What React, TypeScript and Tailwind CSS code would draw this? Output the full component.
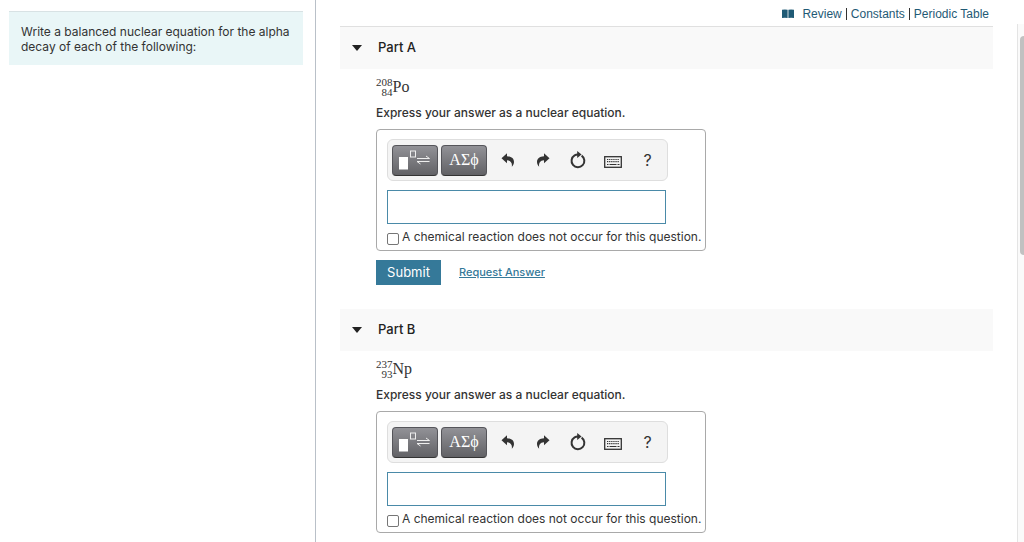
import { useState } from "react"

interface PartData {
  id: string
  title: string
  mass: string
  atomic: string
  symbol: string
}

const parts: Array<PartData> = [
  { id: "a", title: "Part A", mass: "208", atomic: "84", symbol: "Po" },
  { id: "b", title: "Part B", mass: "237", atomic: "93", symbol: "Np" },
]

function BookIcon() {
  return (
    <svg width="12" height="10" viewBox="0 0 12 10" fill="#1f5a75" aria-hidden="true">
      <path d="M0 .8Q3 0 5.6 .8V9Q3 8.3 0 9ZM6.4 .8Q9 0 12 .8V9Q9 8.3 6.4 9Z" />
    </svg>
  )
}

function TemplateIcon() {
  return (
    <svg width="32" height="20" viewBox="0 0 32 20" fill="none" aria-hidden="true">
      <rect x="0" y="7" width="9" height="12.5" fill="#fff" />
      <rect x="11.5" y="1" width="5" height="6" stroke="#eee" />
      <path d="M18 8.5H30.5L27 6M30.5 11.5H18L21.5 14" stroke="#eee" />
    </svg>
  )
}

function UndoIcon() {
  return (
    <svg width="14" height="14" viewBox="0 0 14 14" fill="#333" aria-hidden="true">
      <path d="M0.5 5.2 6 .3V3.2C10.5 3.4 13 5.5 13 9 13 10.8 12.2 12.6 10.8 13.7 11.4 10.3 10 7.5 6 7.3V10.2Z" />
    </svg>
  )
}

function ResetIcon() {
  return (
    <svg width="16" height="18" viewBox="0 0 16 18" fill="none" aria-hidden="true">
      <path
        d="M11.6 4.6A6.4 6.4 0 1 1 4.6 4.4Q6 3.5 8 3.4"
        stroke="#333"
        strokeWidth="2"
      />
      <path d="M7.2 0 11.6 3.4 7.2 7Z" fill="#333" />
    </svg>
  )
}

function KeyboardIcon() {
  return (
    <svg width="18" height="12" viewBox="0 0 18 12" fill="none" aria-hidden="true">
      <rect x=".7" y=".7" width="16.6" height="10.6" stroke="#333" strokeWidth="1.3" />
      <path d="M3 3.5H15.5M3 5.7H15.5" stroke="#333" strokeWidth="1.2" strokeDasharray="1.3 .8" />
      <path d="M3 8.5H4.5M5.5 8.5H12.5M13.5 8.5H15.5" stroke="#333" strokeWidth="1.2" />
    </svg>
  )
}

const darkButton =
  "flex h-[31px] w-[46px] shrink-0 items-center justify-center rounded border border-[#55555a] border-b-[#333] bg-linear-to-b from-[#929297] to-[#626266] text-white"
const plainButton = "flex h-8 w-[35px] shrink-0 items-center justify-center text-[#333]"

function AnswerBox({ part }: { part: PartData }) {
  const [answer, setAnswer] = useState("")
  const [noReaction, setNoReaction] = useState(false)

  return (
    <div className="w-[330px] rounded border border-[#a9a9a9] pt-[9px] pb-1 pl-2.5">
      <div className="flex h-[42px] w-[281px] items-center gap-[3px] rounded-md border border-[#dedede] bg-[#f4f4f4] pl-1">
        <button className={darkButton} aria-label="Templates">
          <TemplateIcon />
        </button>
        <button
          className={`${darkButton} font-['Liberation_Serif',serif] text-base`}
          aria-label="Symbols"
        >
          ΑΣϕ
        </button>
        <div className="flex">
          <button className={plainButton} aria-label="Undo">
            <UndoIcon />
          </button>
          <button className={plainButton} aria-label="Redo">
            <span className="-scale-x-100">
              <UndoIcon />
            </span>
          </button>
          <button className={plainButton} aria-label="Reset">
            <ResetIcon />
          </button>
          <button className={`${plainButton} pt-1`} aria-label="Keyboard shortcuts">
            <KeyboardIcon />
          </button>
          <button className={`${plainButton} text-base`} aria-label="Help">
            ?
          </button>
        </div>
      </div>
      <input
        type="text"
        aria-label={`${part.title} answer`}
        className="mt-[9px] block h-[34px] w-[279px] border border-[#4a8aa8] bg-white px-2 text-sm outline-none"
        value={answer}
        onChange={(e) => setAnswer(e.target.value)}
      />
      <label className="mt-1 flex items-center gap-[3px] leading-[18px]">
        <input
          type="checkbox"
          className="mt-1 size-3 appearance-none rounded-xs border border-[#767676] bg-white checked:bg-[#357999]"
          checked={noReaction}
          onChange={(e) => setNoReaction(e.target.checked)}
        />
        A chemical reaction does not occur for this question.
      </label>
    </div>
  )
}

function Part({ part }: { part: PartData }) {
  const [open, setOpen] = useState(true)

  return (
    <section className="pb-6">
      <h2 className="bg-[#f9f9f9]">
        <button
          className="flex h-[42px] w-full items-center gap-4 px-3 text-left text-[13px] font-medium text-[#222]"
          aria-expanded={open}
          onClick={() => setOpen(!open)}
        >
          <svg width="10" height="6" viewBox="0 0 10 6" fill="#222" aria-hidden="true">
            <path d="M0 0H10L5 6Z" />
          </svg>
          {part.title}
        </button>
      </h2>
      {open && (
        <div className="pt-1.5 pl-9">
          <div className="flex h-6 items-center font-['Liberation_Serif',serif] text-[#333]">
            <span className="flex flex-col text-right text-[11px] leading-[10px]">
              <span>{part.mass}</span>
              <span>{part.atomic}</span>
            </span>
            <span className="text-base">{part.symbol}</span>
          </div>
          <p className="mt-1.5 mb-2 leading-4 font-medium">
            Express your answer as a nuclear equation.
          </p>
          <AnswerBox part={part} />
          <div className="mt-[9px] flex items-center gap-[18px]">
            <button className="h-[25px] w-[65px] bg-[#357999] text-[13px] text-white">
              Submit
            </button>
            <a href="#" className="text-[11px] font-medium text-[#357999] underline">
              Request Answer
            </a>
          </div>
        </div>
      )}
    </section>
  )
}

export default function App() {
  return (
    <div className="flex h-screen overflow-hidden bg-white font-['Inter',sans-serif] text-xs text-[#333]">
      <aside className="w-[316px] shrink-0 border-r border-[#b9c0c8] py-[11px] pr-3 pl-[9px]">
        <p className="border-t border-[#d8e2e4] bg-[#e9f6f7] px-3 pt-3 pb-[11px] leading-[15px]">
          Write a balanced nuclear equation for the alpha decay of each of the following:
        </p>
      </aside>
      <main className="min-w-0 flex-1 overflow-x-hidden overflow-y-auto px-6 [scrollbar-width:none]">
        <nav className="flex h-[26px] items-center justify-end gap-1 pt-0.5 pr-1 font-['Liberation_Sans',sans-serif] text-xs text-[#1f5a75]">
          <a href="#" className="flex items-center gap-2">
            <BookIcon />
            Review
          </a>
          <span className="h-3 w-px bg-[#333]" />
          <a href="#">Constants</a>
          <span className="h-3 w-px bg-[#333]" />
          <a href="#">Periodic Table</a>
        </nav>
        <div className="border-t border-[#e0e0e0]">
          {parts.map((part) => (
            <Part key={part.id} part={part} />
          ))}
        </div>
      </main>
      <div className="mt-6 w-[7px] shrink-0 border-l border-[#e4e4e4] bg-[#fafafa] pt-3 pl-0.5">
        <div className="h-[219px] rounded-l bg-[#c1c1c1]" />
      </div>
    </div>
  )
}
